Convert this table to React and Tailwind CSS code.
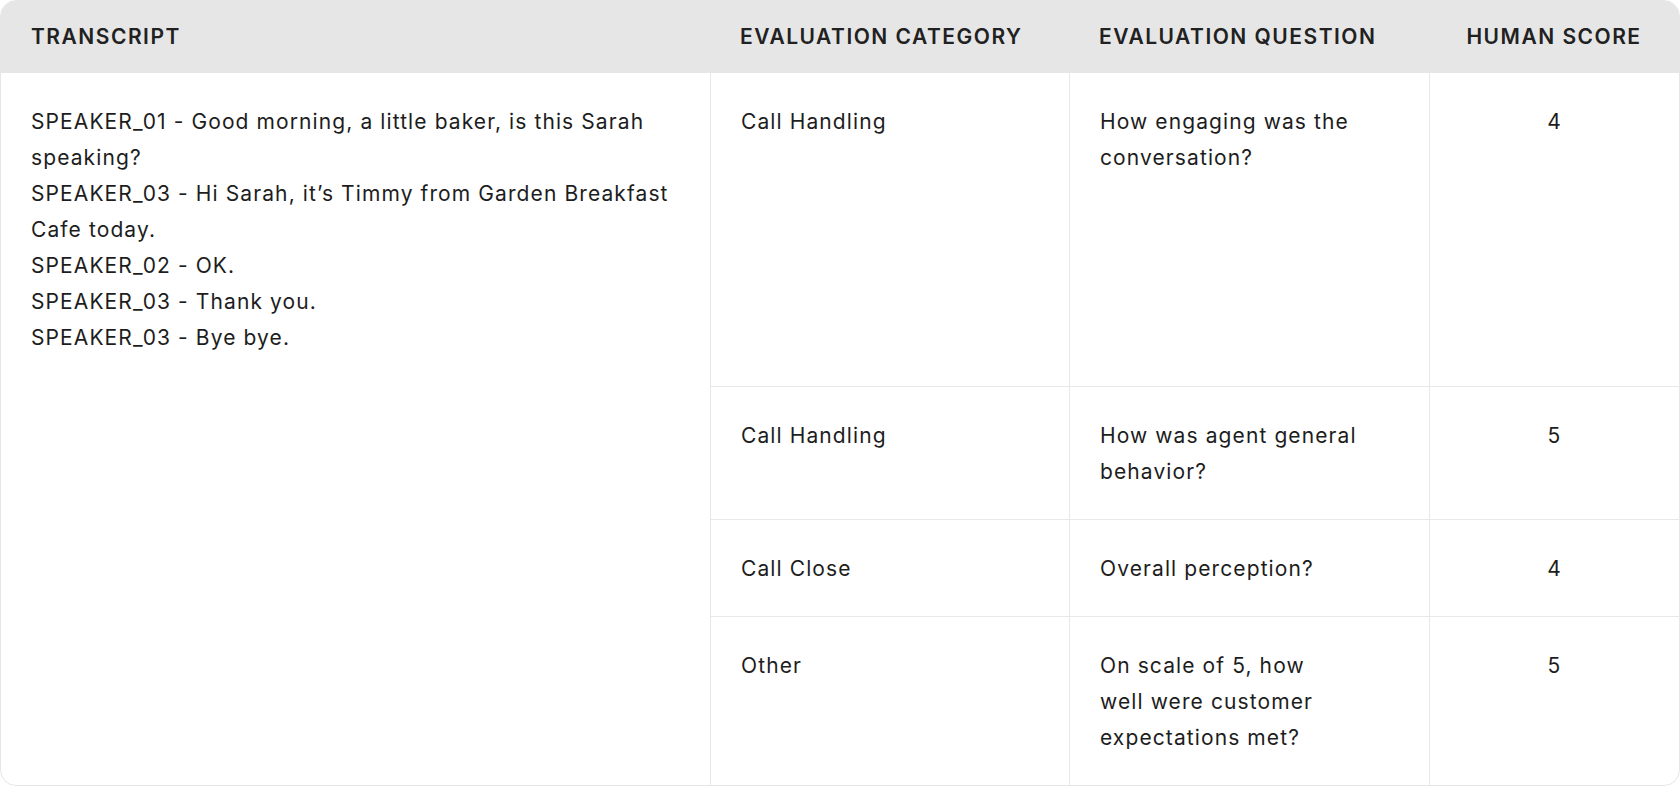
import React from "react";

const rows = [
  { category: "Call Handling", question: ["How engaging was the", "conversation?"], score: 4 },
  { category: "Call Handling", question: ["How was agent general", "behavior?"], score: 5 },
  { category: "Call Close", question: ["Overall perception?"], score: 4 },
  { category: "Other", question: ["On scale of 5, how", "well were customer", "expectations met?"], score: 5 },
];

const transcript = [
  "SPEAKER_01 - Good morning, a little baker, is this Sarah",
  "speaking?",
  "SPEAKER_03 - Hi Sarah, it’s Timmy from Garden Breakfast",
  "Cafe today.",
  "SPEAKER_02 - OK.",
  "SPEAKER_03 - Thank you.",
  "SPEAKER_03 - Bye bye.",
];

const App = () => {
  return (
    <div
      className="w-[1680px] h-[786px] bg-white text-[#1d1d1d] text-[21px] leading-[36px] tracking-[1.1px]"
      style={{ fontFamily: "Inter, 'Liberation Sans', sans-serif" }}
    >
      <div className="w-full h-full flex flex-col rounded-2xl border border-[#e6e6e6] overflow-hidden">
        {/* Header */}
        <div className="h-[72px] shrink-0 bg-[#e6e6e6] grid grid-cols-[709px_359px_360px_1fr] font-semibold uppercase leading-7 tracking-[1.5px] text-[#212121]">
          <div className="px-[30px] pt-[22px]">Transcript</div>
          <div className="px-[30px] pt-[22px]">Evaluation Category</div>
          <div className="px-[30px] pt-[22px]">Evaluation Question</div>
          <div className="pt-[22px] text-center">Human Score</div>
        </div>

        {/* Body */}
        <div className="flex-1 flex flex-row">
          <div className="w-[710px] shrink-0 border-r border-[#e8e8e8] px-[30px] pt-[31px]">
            {transcript.map((line, i) => (
              <div key={`line-${i}`} className="whitespace-nowrap">{line}</div>
            ))}
          </div>
          <div className="flex-1 flex flex-col">
            {rows.map((row, i) => (
              <div
                key={`row-${i}`}
                className={`grid grid-cols-[359px_360px_1fr] ${
                  i === 0 ? "flex-1 border-b border-[#e8e8e8]" : i < rows.length - 1 ? "border-b border-[#e8e8e8]" : ""
                }`}
              >
                <div className="border-r border-[#e8e8e8] px-[30px] pt-[31px] pb-[29px]">{row.category}</div>
                <div className="border-r border-[#e8e8e8] px-[30px] pt-[31px] pb-[29px]">
                  {row.question.map((q, j) => (
                    <div key={`q-${j}`} className="whitespace-nowrap">{q}</div>
                  ))}
                </div>
                <div className="pt-[31px] pb-[29px] text-center">{row.score}</div>
              </div>
            ))}
          </div>
        </div>
      </div>
    </div>
  );
};

export default App;
